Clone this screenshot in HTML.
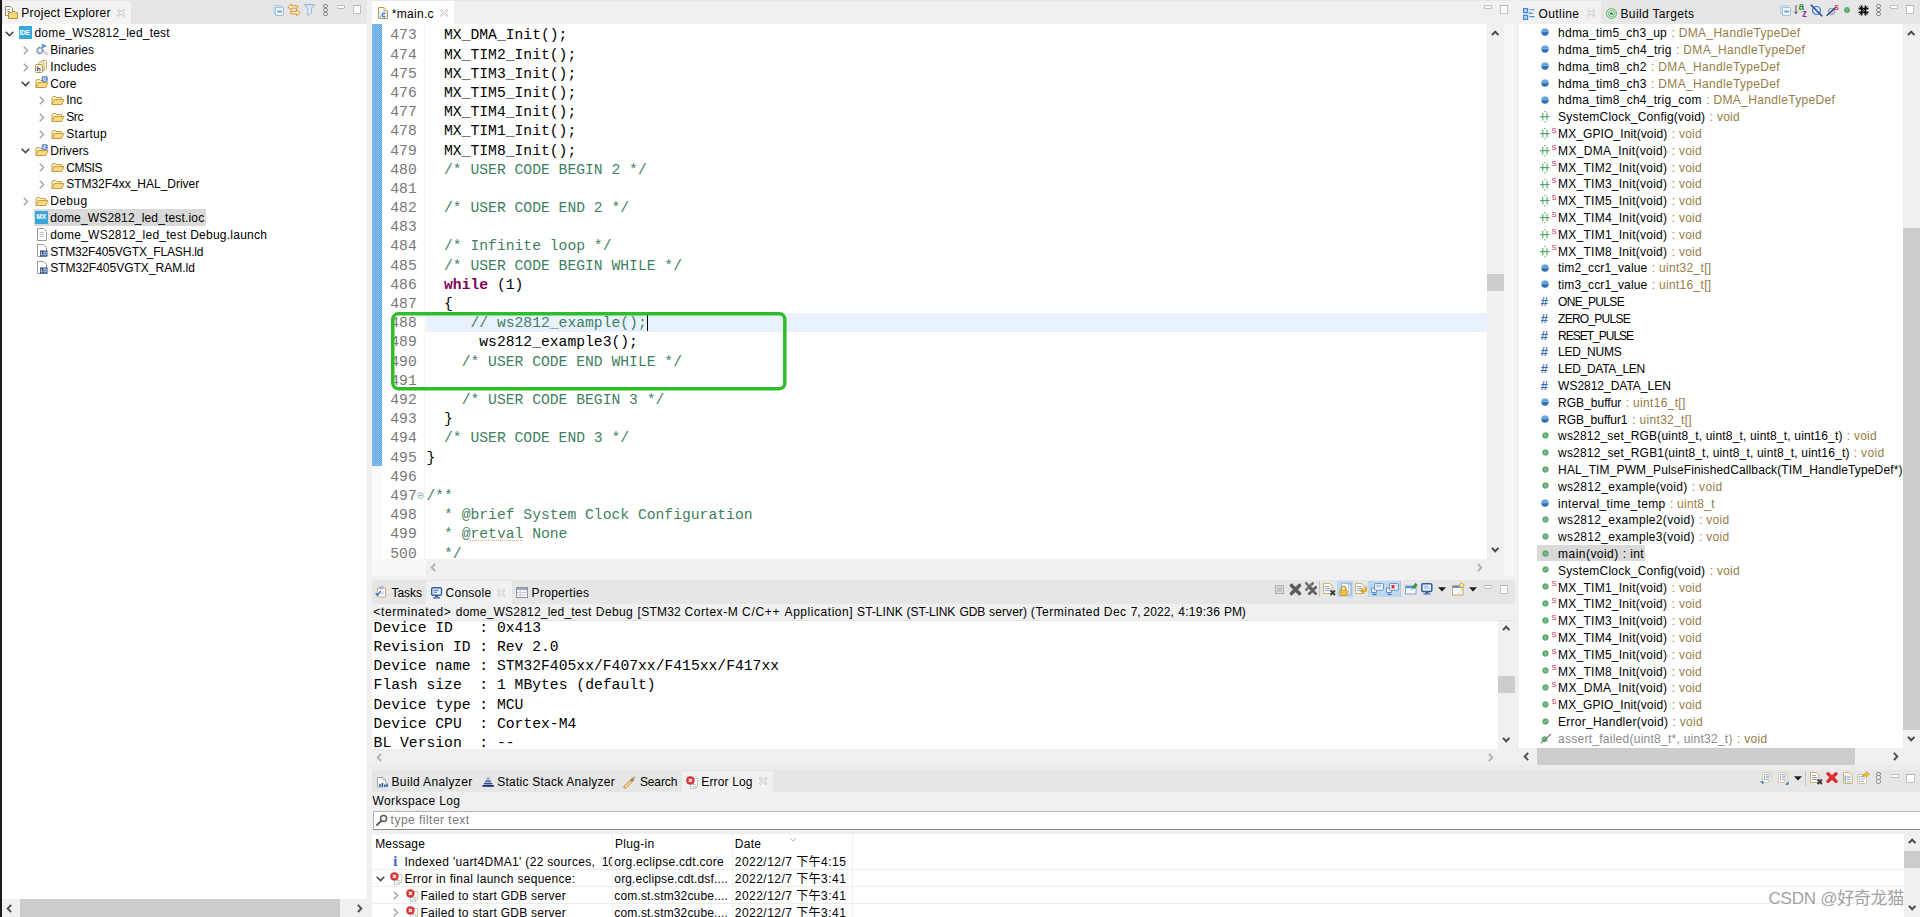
<!DOCTYPE html><html><head><meta charset="utf-8"><title>IDE</title><style>
*{box-sizing:border-box}
html,body{margin:0;padding:0}
body{width:1920px;height:917px;overflow:hidden;background:#f0f0f0;position:relative;font-family:"Liberation Sans","Noto Sans CJK SC",sans-serif;font-size:12px;color:#000}
.abs{position:absolute}
.t{position:absolute;white-space:pre;line-height:17px;height:17px}
.m{position:absolute;white-space:pre;font-family:"Liberation Mono",monospace;font-size:14.7px;line-height:19.2px;height:19.2px}
.c{color:#3f7f5f}
.u{text-decoration:underline dotted #f0a27c 1px;text-underline-offset:2px}
.k{color:#7f0055;font-weight:bold}
.ln{color:#787878}
.ty{color:#957d47}
.tabbar{position:absolute;background:#e6e6e6}
.tab{position:absolute;background:#f3f3f3}
.white{position:absolute;background:#fff}
svg{position:absolute;overflow:visible}
</style></head><body>
<div class="abs" style="left:0px;top:0px;width:2px;height:917px;background:#1a1a1a;"></div>
<div class="abs" style="left:2px;top:0px;width:365px;height:24.4px;background:#e6e6e6;"></div>
<div class="abs" style="left:3px;top:1px;width:128px;height:23.4px;background:#f3f3f3;"></div>
<div class="abs" style="left:2px;top:24.4px;width:365px;height:875px;background:#fff;"></div>
<svg style="left:5px;top:6px" width="13" height="13" viewBox="0 0 13 13"><path d="M0.5 0.5 H5.5 L7.5 2.5 V9.5 H0.5 Z" fill="#fdfdfd" stroke="#9a8a60" stroke-width="1"/><path d="M2 3.5H5 M2 5.5H5" stroke="#7aa0d0" stroke-width="1"/><path d="M3.5 6.5 H6.5 L7.5 5.5 H10 L11 6.5 H12.5 V12.5 H3.5 Z" fill="#f7d774" stroke="#b8923a" stroke-width="1"/></svg>
<div class="t" style="left:21.3px;top:5.0px;letter-spacing:0.252px;">Project Explorer</div>
<svg style="left:117px;top:9px" width="8.4" height="7.8" viewBox="0 0 8 8" preserveAspectRatio="none"><path d="M0.3 1.4 L1.4 0.3 L4 2.9 L6.6 0.3 L7.7 1.4 L5.1 4 L7.7 6.6 L6.6 7.7 L4 5.1 L1.4 7.7 L0.3 6.6 L2.9 4 Z" fill="#fbfbfb" stroke="#b9b9b9" stroke-width=".8"/></svg>
<svg style="left:273px;top:5px" width="11" height="11" viewBox="0 0 11 11"><rect x="0.5" y="0.5" width="8" height="8" rx=".6" fill="#d5e4f6" stroke="#b4c9e6" stroke-width=".9"/><rect x="2.4" y="2.4" width="8.1" height="8.1" rx=".6" fill="#eaf3fd" stroke="#9db6da" stroke-width=".9"/><path d="M4.2 6.5H8.8" stroke="#6f9cc8" stroke-width="1.7"/></svg>
<svg style="left:287px;top:3px" width="14" height="14" viewBox="0 0 14 14"><path d="M0.8 4 L4.6 0.8 V2.8 H10.6 V5.2 H4.6 V7.2 Z" fill="#fbeec4" stroke="#d39b34" stroke-width="1"/><path d="M13.2 9.6 L9.4 6.4 V8.4 H3.4 V10.8 H9.4 V12.8 Z" fill="#fbeec4" stroke="#d39b34" stroke-width="1"/></svg>
<svg style="left:303.5px;top:4px" width="11" height="12" viewBox="0 0 11 12"><defs><linearGradient id="fg1" x1="0" y1="0" x2="0" y2="1"><stop offset="0" stop-color="#cfe6fa"/><stop offset="1" stop-color="#f6faff"/></linearGradient></defs><path d="M0.6 0.6 H10.4 L7.3 4.6 V9.2 L3.8 11.4 V4.6 Z" fill="url(#fg1)" stroke="#94b0da" stroke-width="1"/></svg>
<div class="abs" style="left:323.4px;top:4.0px;width:4.4px;height:4.4px;border:0.8px solid #858585;border-radius:2.2px;background:#f8f8f8"></div>
<div class="abs" style="left:323.4px;top:7.9px;width:4.4px;height:4.4px;border:0.8px solid #858585;border-radius:2.2px;background:#f8f8f8"></div>
<div class="abs" style="left:323.4px;top:11.8px;width:4.4px;height:4.4px;border:0.8px solid #858585;border-radius:2.2px;background:#f8f8f8"></div>
<div class="abs" style="left:337px;top:5.3px;width:8.2px;height:3.6px;border:1px solid #bdbdbd;background:#fff;border-radius:1px"></div>
<div class="abs" style="left:352.9px;top:5.3px;width:8.3px;height:8.5px;border:1px solid #c2c2c2;border-top:1.6px solid #b2b2b2;background:#fff"></div>
<svg style="left:5px;top:30.5px" width="9" height="6" viewBox="0 0 9 6"><path d="M0.7 0.8 L4.5 4.6 L8.3 0.8" fill="none" stroke="#404040" stroke-width="1.5"/></svg>
<div class="abs" style="left:19px;top:26.0px;width:13px;height:13px;background:#39a9dc;"></div>
<div class="t" style="left:19.5px;top:28.5px;font-size:6.5px;font-weight:bold;color:#fff;line-height:8px;height:8px;letter-spacing:-0.2px">IDE</div>
<div class="t" style="left:34.5px;top:25.2px;letter-spacing:0.194px;">dome_WS2812_led_test</div>
<svg style="left:23px;top:45.8px" width="6" height="9" viewBox="0 0 6 9"><path d="M0.8 0.7 L4.6 4.5 L0.8 8.3" fill="none" stroke="#a0a0a0" stroke-width="1.3"/></svg>
<svg style="left:35px;top:42.8px" width="13" height="13" viewBox="0 0 13 13"><circle cx="5" cy="7.5" r="3.2" fill="#b9c6da" stroke="#5f7aa3" stroke-width="1.2" stroke-dasharray="1.6 1"/><circle cx="5" cy="7.5" r="1.2" fill="#fff"/><path d="M7 0.5 L12 3 L7 5.5 Z" fill="#5b9bd5"/><path d="M10 8v4 M12 9v3" stroke="#b0b0b0"/></svg>
<div class="t" style="left:50.2px;top:42.0px;letter-spacing:0.068px;">Binaries</div>
<svg style="left:23px;top:62.6px" width="6" height="9" viewBox="0 0 6 9"><path d="M0.8 0.7 L4.6 4.5 L0.8 8.3" fill="none" stroke="#a0a0a0" stroke-width="1.3"/></svg>
<svg style="left:35px;top:59.6px" width="13" height="13" viewBox="0 0 13 13"><rect x="6.5" y="0.5" width="5" height="9" rx="1" fill="#fdf6dc" stroke="#c8ab6a"/><rect x="4" y="2" width="5" height="9" rx="1" fill="#fdf6dc" stroke="#c8ab6a"/><rect x="0.5" y="4.5" width="7" height="8" rx="1" fill="#fdf6dc" stroke="#b89650"/><path d="M2.5 6.5V11 M2.5 9 Q4 7.8 5 9 V11" stroke="#3d62a8" stroke-width="1.1" fill="none"/></svg>
<div class="t" style="left:50.2px;top:58.8px;letter-spacing:0.200px;">Includes</div>
<svg style="left:21px;top:80.9px" width="9" height="6" viewBox="0 0 9 6"><path d="M0.7 0.8 L4.5 4.6 L8.3 0.8" fill="none" stroke="#404040" stroke-width="1.5"/></svg>
<svg style="left:35px;top:76.4px" width="14" height="13" viewBox="0 0 14 13"><path d="M1 4.8 V11.5 H10.5 V4.5 H5.6 L4.6 3.6 H1.8 Z" fill="#fdf3c8" stroke="#c99a3c" stroke-width="1"/><path d="M1 11.5 L3.2 6.6 H13 L10.6 11.5 Z" fill="#fbdc86" stroke="#c99a3c" stroke-width="1"/><rect x="7" y="0.6" width="5.4" height="5" rx="1" fill="#6f96d8" stroke="#4a72b8" stroke-width=".6"/><path d="M10.8 2.2 A1.3 1.3 0 1 0 10.8 4" fill="none" stroke="#fff" stroke-width=".9"/></svg>
<div class="t" style="left:50.2px;top:75.6px;letter-spacing:0.071px;">Core</div>
<svg style="left:39px;top:96.2px" width="6" height="9" viewBox="0 0 6 9"><path d="M0.8 0.7 L4.6 4.5 L0.8 8.3" fill="none" stroke="#a0a0a0" stroke-width="1.3"/></svg>
<svg style="left:51px;top:93.2px" width="14" height="13" viewBox="0 0 14 13"><path d="M1 4.8 V11.5 H10.5 V4.5 H5.6 L4.6 3.6 H1.8 Z" fill="#fdf3c8" stroke="#c99a3c" stroke-width="1"/><path d="M1 11.5 L3.2 6.6 H13 L10.6 11.5 Z" fill="#fbdc86" stroke="#c99a3c" stroke-width="1"/></svg>
<div class="t" style="left:66.2px;top:92.4px;letter-spacing:0.028px;">Inc</div>
<svg style="left:39px;top:113.0px" width="6" height="9" viewBox="0 0 6 9"><path d="M0.8 0.7 L4.6 4.5 L0.8 8.3" fill="none" stroke="#a0a0a0" stroke-width="1.3"/></svg>
<svg style="left:51px;top:110.0px" width="14" height="13" viewBox="0 0 14 13"><path d="M1 4.8 V11.5 H10.5 V4.5 H5.6 L4.6 3.6 H1.8 Z" fill="#fdf3c8" stroke="#c99a3c" stroke-width="1"/><path d="M1 11.5 L3.2 6.6 H13 L10.6 11.5 Z" fill="#fbdc86" stroke="#c99a3c" stroke-width="1"/></svg>
<div class="t" style="left:66.2px;top:109.2px;letter-spacing:-0.400px;">Src</div>
<svg style="left:39px;top:129.8px" width="6" height="9" viewBox="0 0 6 9"><path d="M0.8 0.7 L4.6 4.5 L0.8 8.3" fill="none" stroke="#a0a0a0" stroke-width="1.3"/></svg>
<svg style="left:51px;top:126.80000000000001px" width="14" height="13" viewBox="0 0 14 13"><path d="M1 4.8 V11.5 H10.5 V4.5 H5.6 L4.6 3.6 H1.8 Z" fill="#fdf3c8" stroke="#c99a3c" stroke-width="1"/><path d="M1 11.5 L3.2 6.6 H13 L10.6 11.5 Z" fill="#fbdc86" stroke="#c99a3c" stroke-width="1"/></svg>
<div class="t" style="left:66.2px;top:126.0px;letter-spacing:0.314px;">Startup</div>
<svg style="left:21px;top:148.10000000000002px" width="9" height="6" viewBox="0 0 9 6"><path d="M0.7 0.8 L4.5 4.6 L8.3 0.8" fill="none" stroke="#404040" stroke-width="1.5"/></svg>
<svg style="left:35px;top:143.60000000000002px" width="14" height="13" viewBox="0 0 14 13"><path d="M1 4.8 V11.5 H10.5 V4.5 H5.6 L4.6 3.6 H1.8 Z" fill="#fdf3c8" stroke="#c99a3c" stroke-width="1"/><path d="M1 11.5 L3.2 6.6 H13 L10.6 11.5 Z" fill="#fbdc86" stroke="#c99a3c" stroke-width="1"/><rect x="7" y="0.6" width="5.4" height="5" rx="1" fill="#6f96d8" stroke="#4a72b8" stroke-width=".6"/><path d="M10.8 2.2 A1.3 1.3 0 1 0 10.8 4" fill="none" stroke="#fff" stroke-width=".9"/></svg>
<div class="t" style="left:50.2px;top:142.8px;letter-spacing:0.100px;">Drivers</div>
<svg style="left:39px;top:163.4px" width="6" height="9" viewBox="0 0 6 9"><path d="M0.8 0.7 L4.6 4.5 L0.8 8.3" fill="none" stroke="#a0a0a0" stroke-width="1.3"/></svg>
<svg style="left:51px;top:160.4px" width="14" height="13" viewBox="0 0 14 13"><path d="M1 4.8 V11.5 H10.5 V4.5 H5.6 L4.6 3.6 H1.8 Z" fill="#fdf3c8" stroke="#c99a3c" stroke-width="1"/><path d="M1 11.5 L3.2 6.6 H13 L10.6 11.5 Z" fill="#fbdc86" stroke="#c99a3c" stroke-width="1"/></svg>
<div class="t" style="left:66.2px;top:159.6px;letter-spacing:-0.443px;">CMSIS</div>
<svg style="left:39px;top:180.20000000000002px" width="6" height="9" viewBox="0 0 6 9"><path d="M0.8 0.7 L4.6 4.5 L0.8 8.3" fill="none" stroke="#a0a0a0" stroke-width="1.3"/></svg>
<svg style="left:51px;top:177.20000000000002px" width="14" height="13" viewBox="0 0 14 13"><path d="M1 4.8 V11.5 H10.5 V4.5 H5.6 L4.6 3.6 H1.8 Z" fill="#fdf3c8" stroke="#c99a3c" stroke-width="1"/><path d="M1 11.5 L3.2 6.6 H13 L10.6 11.5 Z" fill="#fbdc86" stroke="#c99a3c" stroke-width="1"/></svg>
<div class="t" style="left:66.2px;top:176.4px;letter-spacing:-0.019px;">STM32F4xx_HAL_Driver</div>
<svg style="left:23px;top:197.0px" width="6" height="9" viewBox="0 0 6 9"><path d="M0.8 0.7 L4.6 4.5 L0.8 8.3" fill="none" stroke="#a0a0a0" stroke-width="1.3"/></svg>
<svg style="left:35px;top:194.0px" width="14" height="13" viewBox="0 0 14 13"><path d="M1 4.8 V11.5 H10.5 V4.5 H5.6 L4.6 3.6 H1.8 Z" fill="#fdf3c8" stroke="#c99a3c" stroke-width="1"/><path d="M1 11.5 L3.2 6.6 H13 L10.6 11.5 Z" fill="#fbdc86" stroke="#c99a3c" stroke-width="1"/></svg>
<div class="t" style="left:50.2px;top:193.2px;letter-spacing:0.385px;">Debug</div>
<div class="abs" style="left:34px;top:209.4px;width:172px;height:16.8px;background:#d9d9d9;"></div>
<div class="abs" style="left:35px;top:210.8px;width:13px;height:13px;background:#39a9dc;"></div>
<div class="t" style="left:36.5px;top:213.3px;font-size:6.5px;font-weight:bold;color:#fff;line-height:8px;height:8px;letter-spacing:-0.2px">MX</div>
<div class="t" style="left:50.2px;top:210.0px;letter-spacing:0.171px;">dome_WS2812_led_test.ioc</div>
<svg style="left:36px;top:227.60000000000002px" width="12" height="13" viewBox="0 0 12 13"><path d="M1.5 0.5 H7.5 L10.5 3.5 V12.5 H1.5 Z" fill="#fff" stroke="#9a9a9a" stroke-width="1"/><path d="M3.5 4.5H8 M3.5 6.5H8 M3.5 8.5H8" stroke="#b5c7e3" stroke-width="1"/></svg>
<div class="t" style="left:50.2px;top:226.8px;letter-spacing:0.248px;">dome_WS2812_led_test Debug.launch</div>
<svg style="left:36px;top:244.4px" width="12" height="13" viewBox="0 0 12 13"><path d="M1.5 0.5 H7.5 L10.5 3.5 V12.5 H1.5 Z" fill="#fff" stroke="#9a9a9a" stroke-width="1"/><rect x="4" y="6.5" width="7.5" height="6" fill="#2b4f8c"/><path d="M5.3 7.8V11H6.8 M8 7.8V11 H9 A1.5 1.6 0 0 0 9 7.8 Z" stroke="#fff" stroke-width=".8" fill="none"/></svg>
<div class="t" style="left:50.2px;top:243.6px;letter-spacing:-0.161px;">STM32F405VGTX_FLASH.ld</div>
<svg style="left:36px;top:261.20000000000005px" width="12" height="13" viewBox="0 0 12 13"><path d="M1.5 0.5 H7.5 L10.5 3.5 V12.5 H1.5 Z" fill="#fff" stroke="#9a9a9a" stroke-width="1"/><rect x="4" y="6.5" width="7.5" height="6" fill="#2b4f8c"/><path d="M5.3 7.8V11H6.8 M8 7.8V11 H9 A1.5 1.6 0 0 0 9 7.8 Z" stroke="#fff" stroke-width=".8" fill="none"/></svg>
<div class="t" style="left:50.2px;top:260.4px;letter-spacing:-0.001px;">STM32F405VGTX_RAM.ld</div>
<div class="abs" style="left:2px;top:899px;width:365px;height:18px;background:#f0f0f0;"></div>
<div class="abs" style="left:20px;top:899px;width:320px;height:18px;background:#cdcdcd;"></div>
<svg style="left:6px;top:903.5px" width="6" height="9" viewBox="0 0 6 9"><path d="M5.1 0.9 L1.7 4.5 L5.1 8.1" fill="none" stroke="#505050" stroke-width="2"/></svg>
<svg style="left:356.5px;top:903.5px" width="6" height="9" viewBox="0 0 6 9"><path d="M0.9 0.9 L4.3 4.5 L0.9 8.1" fill="none" stroke="#505050" stroke-width="2"/></svg>
<div class="abs" style="left:372px;top:0px;width:1142px;height:24.3px;background:#f0f0f0;"></div>
<div class="abs" style="left:372px;top:0px;width:1142px;height:1px;background:#e9e9e9;"></div>
<div class="abs" style="left:372px;top:1.3px;width:82px;height:23px;background:#fff;"></div>
<svg style="left:378px;top:7px" width="10" height="12" viewBox="0 0 10 12"><path d="M0.5 0.5 H6 L9.5 4 V11.5 H0.5 Z" fill="#fff" stroke="#b39b55" stroke-width="1"/><path d="M6 0.5 V4 H9.5" fill="#f2e3a8" stroke="#b39b55" stroke-width=".8"/><rect x="1.2" y="4.6" width="7.4" height="6.2" fill="#e2ebf8"/><path d="M7.2 6.9 A1.7 1.8 0 1 0 7.2 9.2" fill="none" stroke="#4a78b8" stroke-width="1.3"/><rect x="1.6" y="9" width="1" height="1" fill="#6a93c8"/></svg>
<div class="t" style="left:391.7px;top:5.6px;letter-spacing:0.312px;">*main.c</div>
<svg style="left:439.5px;top:9px" width="8.4" height="7.8" viewBox="0 0 8 8" preserveAspectRatio="none"><path d="M0.3 1.4 L1.4 0.3 L4 2.9 L6.6 0.3 L7.7 1.4 L5.1 4 L7.7 6.6 L6.6 7.7 L4 5.1 L1.4 7.7 L0.3 6.6 L2.9 4 Z" fill="#fbfbfb" stroke="#b9b9b9" stroke-width=".8"/></svg>
<div class="abs" style="left:1484px;top:5px;width:8.2px;height:3.6px;border:1px solid #bdbdbd;background:#fff;border-radius:1px"></div>
<div class="abs" style="left:1499.9px;top:5px;width:8.3px;height:8.5px;border:1px solid #c2c2c2;border-top:1.6px solid #b2b2b2;background:#fff"></div>
<div class="abs" style="left:372px;top:24.3px;width:1115px;height:534.7px;background:#fff;"></div>
<svg style="left:372px;top:24px" width="10" height="442" viewBox="0 0 10 442"><defs><pattern id="qd" width="2" height="2" patternUnits="userSpaceOnUse"><rect width="2" height="2" fill="#62a8e6"/><rect x="0" y="0" width="1" height="1" fill="#9ccbf1"/><rect x="1" y="1" width="1" height="1" fill="#7db9ec"/></pattern></defs><rect width="10" height="442" fill="url(#qd)"/></svg>
<div class="abs" style="left:424px;top:24.3px;width:1px;height:535px;background:#f5f5f5;"></div>
<div class="abs" style="left:372px;top:466px;width:10px;height:93px;background:#fafafa;"></div>
<div class="abs" style="left:425.5px;top:312.65000000000003px;width:1061.5px;height:19.19px;background:#e8f2fe;"></div>
<div class="m ln" style="left:390.3px;top:26.40px">473</div>
<div class="m" style="left:426.4px;top:26.40px">  MX_DMA_Init();</div>
<div class="m ln" style="left:390.3px;top:45.59px">474</div>
<div class="m" style="left:426.4px;top:45.59px">  MX_TIM2_Init();</div>
<div class="m ln" style="left:390.3px;top:64.78px">475</div>
<div class="m" style="left:426.4px;top:64.78px">  MX_TIM3_Init();</div>
<div class="m ln" style="left:390.3px;top:83.97px">476</div>
<div class="m" style="left:426.4px;top:83.97px">  MX_TIM5_Init();</div>
<div class="m ln" style="left:390.3px;top:103.16px">477</div>
<div class="m" style="left:426.4px;top:103.16px">  MX_TIM4_Init();</div>
<div class="m ln" style="left:390.3px;top:122.35px">478</div>
<div class="m" style="left:426.4px;top:122.35px">  MX_TIM1_Init();</div>
<div class="m ln" style="left:390.3px;top:141.54px">479</div>
<div class="m" style="left:426.4px;top:141.54px">  MX_TIM8_Init();</div>
<div class="m ln" style="left:390.3px;top:160.73px">480</div>
<div class="m" style="left:426.4px;top:160.73px"><span class="c">  /* USER CODE BEGIN 2 */</span></div>
<div class="m ln" style="left:390.3px;top:179.92px">481</div>
<div class="m ln" style="left:390.3px;top:199.11px">482</div>
<div class="m" style="left:426.4px;top:199.11px"><span class="c">  /* USER CODE END 2 */</span></div>
<div class="m ln" style="left:390.3px;top:218.30px">483</div>
<div class="m ln" style="left:390.3px;top:237.49px">484</div>
<div class="m" style="left:426.4px;top:237.49px"><span class="c">  /* Infinite loop */</span></div>
<div class="m ln" style="left:390.3px;top:256.68px">485</div>
<div class="m" style="left:426.4px;top:256.68px"><span class="c">  /* USER CODE BEGIN WHILE */</span></div>
<div class="m ln" style="left:390.3px;top:275.87px">486</div>
<div class="m" style="left:426.4px;top:275.87px">  <span class="k">while</span> (1)</div>
<div class="m ln" style="left:390.3px;top:295.06px">487</div>
<div class="m" style="left:426.4px;top:295.06px">  {</div>
<div class="m ln" style="left:390.3px;top:314.25px">488</div>
<div class="m" style="left:426.4px;top:314.25px"><span class="c">     // ws2812_example();</span></div>
<div class="m ln" style="left:390.3px;top:333.44px">489</div>
<div class="m" style="left:426.4px;top:333.44px">      ws2812_example3();</div>
<div class="m ln" style="left:390.3px;top:352.63px">490</div>
<div class="m" style="left:426.4px;top:352.63px"><span class="c">    /* USER CODE END WHILE */</span></div>
<div class="m ln" style="left:390.3px;top:371.82px">491</div>
<div class="m ln" style="left:390.3px;top:391.01px">492</div>
<div class="m" style="left:426.4px;top:391.01px"><span class="c">    /* USER CODE BEGIN 3 */</span></div>
<div class="m ln" style="left:390.3px;top:410.20px">493</div>
<div class="m" style="left:426.4px;top:410.20px">  }</div>
<div class="m ln" style="left:390.3px;top:429.39px">494</div>
<div class="m" style="left:426.4px;top:429.39px"><span class="c">  /* USER CODE END 3 */</span></div>
<div class="m ln" style="left:390.3px;top:448.58px">495</div>
<div class="m" style="left:426.4px;top:448.58px">}</div>
<div class="m ln" style="left:390.3px;top:467.77px">496</div>
<div class="m ln" style="left:390.3px;top:486.96px">497</div>
<div class="m" style="left:426.4px;top:486.96px"><span class="c">/**</span></div>
<div class="m ln" style="left:390.3px;top:506.15px">498</div>
<div class="m" style="left:426.4px;top:506.15px"><span class="c">  * @brief System Clock Configuration</span></div>
<div class="m ln" style="left:390.3px;top:525.34px">499</div>
<div class="m" style="left:426.4px;top:525.34px"><span class="c">  * @</span><span class="c u">retval</span><span class="c"> None</span></div>
<div class="m ln" style="left:390.3px;top:544.53px">500</div>
<div class="m" style="left:426.4px;top:544.53px"><span class="c">  */</span></div>
<svg style="left:416.5px;top:491.56px" width="7" height="7" viewBox="0 0 7 7"><circle cx="3.5" cy="3.5" r="2.9" fill="#f4f7fb" stroke="#9fb2cf" stroke-width=".9"/><path d="M2 3.5H5" stroke="#7f96b8" stroke-width=".9"/></svg>
<div class="abs" style="left:647px;top:313.85px;width:1.3px;height:17px;background:#000;"></div>
<svg style="left:391.4px;top:312.2px" width="395.6" height="78.4" viewBox="0 0 395.6 78.4"><rect x="1.75" y="1.75" width="392.1" height="74.9" rx="5.6" fill="none" stroke="#2fbe2a" stroke-width="3.5"/></svg>
<div class="abs" style="left:1487px;top:24px;width:17px;height:535px;background:#f0f0f0;"></div>
<div class="abs" style="left:1487px;top:274px;width:17px;height:17px;background:#cdcdcd;"></div>
<svg style="left:1491.3px;top:29.6px" width="8.4" height="6" viewBox="0 0 8.4 6"><path d="M0.9 5.1 L4.2 1.7 L7.5 5.1" fill="none" stroke="#4a4a4a" stroke-width="2"/></svg>
<svg style="left:1491.3px;top:547px" width="8.4" height="6" viewBox="0 0 8.4 6"><path d="M0.9 0.9 L4.2 4.3 L7.5 0.9" fill="none" stroke="#4a4a4a" stroke-width="2"/></svg>
<div class="abs" style="left:1504px;top:24px;width:10.3px;height:552px;background:#f8f8f8;"></div>
<div class="abs" style="left:372px;top:559px;width:53.5px;height:17px;background:#f8f8f8;"></div>
<div class="abs" style="left:425.5px;top:559px;width:1061.5px;height:17px;background:#f0f0f0;"></div>
<svg style="left:429.5px;top:563.0px" width="6" height="9" viewBox="0 0 6 9"><path d="M5.1 0.9 L1.7 4.5 L5.1 8.1" fill="none" stroke="#b4b4b4" stroke-width="2"/></svg>
<svg style="left:1476.5px;top:563.0px" width="6" height="9" viewBox="0 0 6 9"><path d="M0.9 0.9 L4.3 4.5 L0.9 8.1" fill="none" stroke="#b4b4b4" stroke-width="2"/></svg>
<div class="abs" style="left:1487px;top:559px;width:17px;height:17px;background:#f0f0f0;"></div>
<div class="abs" style="left:372px;top:580.3px;width:1142.5px;height:23.4px;background:#e6e6e6;"></div>
<div class="abs" style="left:426px;top:581.0px;width:86px;height:22.7px;background:#f1f1f1;"></div>
<div class="abs" style="left:372px;top:603.7px;width:1142.5px;height:17px;background:#f0f0f0;"></div>
<div class="abs" style="left:372px;top:619.8px;width:1142.5px;height:0.8px;background:#e4e4e4;"></div>
<div class="abs" style="left:372px;top:620.5px;width:1126px;height:128px;background:#fff;"></div>
<svg style="left:375.3px;top:586.2px" width="12" height="12" viewBox="0 0 13 13"><rect x="2.5" y="2" width="9" height="10" rx="1" fill="#fbfbfb" stroke="#c9a26a"/><rect x="5" y="0.5" width="4" height="3" rx="1" fill="#b9c5d6" stroke="#8a9bb5" stroke-width=".6"/><path d="M6 6.5H10 M6 8.5H10" stroke="#b8c6dc"/><path d="M0.8 7.8 L2.8 10 L6 5.6" fill="none" stroke="#2a7bd0" stroke-width="1.6"/></svg>
<div class="t" style="left:391.6px;top:584.7px;letter-spacing:-0.077px;">Tasks</div>
<svg style="left:431px;top:587px" width="12" height="12" viewBox="0 0 12 12"><rect x="0.7" y="0.7" width="9.8" height="7.6" rx="1.2" fill="#e9f0fb" stroke="#3560a8" stroke-width="1.4"/><path d="M2.6 3.2H7.6 M2.6 5.2H6" stroke="#3560a8" stroke-width=".9"/><path d="M4 8.6H7.2V10H4Z M2.2 10.2H9V11.4H2.2Z" fill="#3560a8"/></svg>
<div class="t" style="left:445.6px;top:584.7px;letter-spacing:0.238px;">Console</div>
<svg style="left:497px;top:589.3px" width="8.4" height="7.8" viewBox="0 0 8 8" preserveAspectRatio="none"><path d="M0.3 1.4 L1.4 0.3 L4 2.9 L6.6 0.3 L7.7 1.4 L5.1 4 L7.7 6.6 L6.6 7.7 L4 5.1 L1.4 7.7 L0.3 6.6 L2.9 4 Z" fill="#fbfbfb" stroke="#b9b9b9" stroke-width=".8"/></svg>
<svg style="left:516px;top:587px" width="12" height="11" viewBox="0 0 12 11"><rect x="0.5" y="0.5" width="11" height="10" fill="#fff" stroke="#8a8fa0"/><rect x="0.5" y="0.5" width="11" height="2.5" fill="#9aa6c0"/><path d="M0.5 5.5H11.5 M0.5 8H11.5 M4.2 3V10.5" stroke="#b5bccb" stroke-width=".8"/></svg>
<div class="t" style="left:531.6px;top:584.7px;letter-spacing:0.290px;">Properties</div>
<div class="abs" style="left:1275px;top:585px;width:9px;height:9px;border:1px solid #b0b0b0;background:#c4c4c4;box-shadow:inset 0 0 0 1px #dcdcdc"></div>
<svg style="left:1289.8px;top:584px" width="11" height="11" viewBox="0 0 11 11"><path d="M1.5 1.5 L9.5 9.5 M9.5 1.5 L1.5 9.5" stroke="#5e5e5e" stroke-width="3.6" stroke-linecap="round"/></svg>
<svg style="left:1304.5px;top:582.3px" width="9" height="9" viewBox="0 0 11 11"><path d="M1.5 1.5 L9.5 9.5 M9.5 1.5 L1.5 9.5" stroke="#767676" stroke-width="3.2" stroke-linecap="round"/></svg>
<svg style="left:1308px;top:586px" width="9" height="9" viewBox="0 0 11 11"><path d="M1.5 1.5 L9.5 9.5 M9.5 1.5 L1.5 9.5" stroke="#606060" stroke-width="3.2" stroke-linecap="round"/></svg>
<div class="abs" style="left:1319.3px;top:581px;width:1px;height:15.5px;background:#c4c4c4;"></div>
<svg style="left:1323px;top:582.5px" width="13" height="13" viewBox="0 0 13 13"><path d="M0.5 0.5 H6.5 L9 3 V10.5 H0.5 Z" fill="#fffdf2" stroke="#c9ab63" stroke-width=".9"/><path d="M2 3.5H6 M2 5.5H7.2 M2 7.5H7.2" stroke="#7d9fd6" stroke-width=".9"/><path d="M7.5 7.5 L12 12 M12 7.5 L7.5 12" stroke="#3a3a3a" stroke-width="1.8"/></svg>
<div class="abs" style="left:1337px;top:581px;width:15.8px;height:15.5px;background:#bcd9f3;"></div>
<svg style="left:1338.5px;top:582.5px" width="13" height="13" viewBox="0 0 13 13"><rect x="2.5" y="0.5" width="10" height="11.5" fill="#fff" stroke="#9ab0cc" stroke-width=".8"/><rect x="9.6" y="1.2" width="2.3" height="10" fill="#dbe3ee" stroke="#9ab0cc" stroke-width=".5"/><path d="M2.3 7.5 V5.6 A2.2 2.2 0 0 1 6.7 5.6 V7.5" fill="none" stroke="#c79a2a" stroke-width="1.4"/><rect x="0.8" y="7" width="7.4" height="5.5" rx=".8" fill="#f0c23c" stroke="#b98a1e" stroke-width=".7"/></svg>
<svg style="left:1354.5px;top:582.5px" width="13" height="13" viewBox="0 0 13 13"><path d="M0.5 0.5 H6.5 L9 3 V10.5 H0.5 Z" fill="#fffdf2" stroke="#c9ab63" stroke-width=".9"/><path d="M2 3.5H6 M2 5.5H7.2 M2 7.5H7.2" stroke="#7d9fd6" stroke-width=".9"/><path d="M11.2 3.5 V8 H6.5 M8.3 6 L6.2 8 L8.3 10" fill="none" stroke="#d9a520" stroke-width="1.7"/></svg>
<div class="abs" style="left:1368px;top:581px;width:31.5px;height:15.5px;background:#bcd9f3;"></div>
<svg style="left:1370.5px;top:582.5px" width="13" height="13" viewBox="0 0 13 13"><rect x="0.6" y="5" width="5" height="4.4" fill="#e6eefa" stroke="#5a82bd" stroke-width=".8"/><path d="M1.2 11.6H5.6 M3.3 9.4V11.6" stroke="#4a76b8" stroke-width="1"/><rect x="3.6" y="0.6" width="8.8" height="6.6" rx=".8" fill="#f4f8ff" stroke="#5a82bd" stroke-width=".9"/><path d="M5.2 2.4H9.6 M5.2 3.8H10.6" stroke="#8fa8cf" stroke-width=".8"/></svg>
<svg style="left:1385.5px;top:582.5px" width="13" height="13" viewBox="0 0 13 13"><rect x="0.6" y="5" width="5" height="4.4" fill="#e6eefa" stroke="#5a82bd" stroke-width=".8"/><path d="M1.2 11.6H5.6 M3.3 9.4V11.6" stroke="#4a76b8" stroke-width="1"/><rect x="3.6" y="0.6" width="8.8" height="6.6" rx=".8" fill="#f4f8ff" stroke="#5a82bd" stroke-width=".9"/><path d="M5.6 2.1 L8.4 5.4 M8.4 2.1 L5.6 5.4" stroke="#e02020" stroke-width="1.4"/><path d="M9.4 2.8H11.4" stroke="#9ab" stroke-width=".7"/></svg>
<div class="abs" style="left:1400.2px;top:581px;width:1px;height:15.5px;background:#c4c4c4;"></div>
<svg style="left:1405px;top:582px" width="13" height="13" viewBox="0 0 13 13"><rect x="0.5" y="4" width="10.5" height="8" fill="#f3f8ff" stroke="#7d9cc9" stroke-width=".9"/><rect x="0.5" y="4" width="10.5" height="2.2" fill="#5b8fd6"/><path d="M6.6 7.8 L8.3 6.1" stroke="#555" stroke-width=".9"/><path d="M7.6 4.9 L10.4 1.3 L12.3 2.9 L9.4 6.4 Z" fill="#2fa84a" stroke="#1d7d33" stroke-width=".6"/></svg>
<svg style="left:1421px;top:582.5px" width="12" height="12" viewBox="0 0 12 12"><rect x="0.8" y="0.8" width="10" height="7.6" rx="1.2" fill="#eaf1fb" stroke="#2f5da8" stroke-width="1.5"/><path d="M3 3.4H7 M3 5.2H8.4" stroke="#88a5d6" stroke-width=".9"/><path d="M4.4 8.8H7.4V10.2H4.4Z M2.4 10.4H9.4V11.6H2.4Z" fill="#2f5da8"/></svg>
<svg style="left:1437.8px;top:587.3px" width="8" height="5" viewBox="0 0 8 5"><path d="M0 0.3 H8 L4 4.6 Z" fill="#1e1e1e"/></svg>
<svg style="left:1451.5px;top:581.5px" width="13" height="14" viewBox="0 0 13 14"><rect x="0.5" y="3.5" width="10.5" height="9.5" fill="#f7fbff" stroke="#c0a060" stroke-width=".9"/><rect x="0.9" y="3.9" width="9.7" height="2" fill="#5b8fd6"/><path d="M9.5 0.6 L12.4 3.2 L9.5 5.8 L6.8 3.2 Z" fill="#fbe9a0" stroke="#c89a2a" stroke-width=".8"/><path d="M9.6 6 Q9.6 11 5.5 12.6" fill="none" stroke="#f2d98a" stroke-width="1"/></svg>
<svg style="left:1469px;top:587.3px" width="8" height="5" viewBox="0 0 8 5"><path d="M0 0.3 H8 L4 4.6 Z" fill="#1e1e1e"/></svg>
<div class="abs" style="left:1484px;top:585px;width:8.2px;height:3.6px;border:1px solid #bdbdbd;background:#fff;border-radius:1px"></div>
<div class="abs" style="left:1499.9px;top:585px;width:8.3px;height:8.5px;border:1px solid #c2c2c2;border-top:1.6px solid #b2b2b2;background:#fff"></div>
<div class="abs" style="left:0;top:0">
<div class="t" style="left:373.35px;top:603.5px;letter-spacing:0.615px;">&lt;terminated&gt;</div>
<div class="t" style="left:455.85px;top:603.5px;letter-spacing:0.209px;">dome_WS2812_led_test</div>
<div class="t" style="left:595.85px;top:603.5px;letter-spacing:0.395px;">Debug</div>
<div class="t" style="left:637.6px;top:603.5px;letter-spacing:0.222px;">[STM32</div>
<div class="t" style="left:684.6px;top:603.5px;letter-spacing:0.532px;">Cortex-M</div>
<div class="t" style="left:742.1px;top:603.5px;letter-spacing:0.683px;">C/C++</div>
<div class="t" style="left:784.6px;top:603.5px;letter-spacing:0.546px;">Application]</div>
<div class="t" style="left:857.1px;top:603.5px;letter-spacing:0.034px;">ST-LINK</div>
<div class="t" style="left:906.6px;top:603.5px;letter-spacing:-0.093px;">(ST-LINK</div>
<div class="t" style="left:959.6px;top:603.5px;letter-spacing:-0.139px;">GDB</div>
<div class="t" style="left:989.1px;top:603.5px;letter-spacing:0.108px;">server)</div>
<div class="t" style="left:1030.85px;top:603.5px;letter-spacing:0.545px;">(Terminated</div>
<div class="t" style="left:1103.85px;top:603.5px;letter-spacing:0.419px;">Dec</div>
<div class="t" style="left:1130.85px;top:603.5px;letter-spacing:-0.333px;">7,</div>
<div class="t" style="left:1143.35px;top:603.5px;letter-spacing:0.114px;">2022,</div>
<div class="t" style="left:1178.35px;top:603.5px;letter-spacing:0.258px;">4:19:36</div>
<div class="t" style="left:1224.1px;top:603.5px;letter-spacing:-0.133px;">PM)</div>
</div>
<div class="abs" style="left:372px;top:620.5px;width:1126px;height:128px;overflow:hidden">
<div class="m" style="left:1.6px;top:-1.60px">Device ID   : 0x413</div>
<div class="m" style="left:1.6px;top:17.59px">Revision ID : Rev 2.0</div>
<div class="m" style="left:1.6px;top:36.78px">Device name : STM32F405xx/F407xx/F415xx/F417xx</div>
<div class="m" style="left:1.6px;top:55.97px">Flash size  : 1 MBytes (default)</div>
<div class="m" style="left:1.6px;top:75.16px">Device type : MCU</div>
<div class="m" style="left:1.6px;top:94.35px">Device CPU  : Cortex-M4</div>
<div class="m" style="left:1.6px;top:113.54px">BL Version  : --</div>
</div>
<div class="abs" style="left:1498px;top:620.5px;width:16.5px;height:128px;background:#f0f0f0;"></div>
<div class="abs" style="left:1498px;top:676px;width:16.5px;height:17px;background:#cdcdcd;"></div>
<svg style="left:1502.05px;top:625.1px" width="8.4" height="6" viewBox="0 0 8.4 6"><path d="M0.9 5.1 L4.2 1.7 L7.5 5.1" fill="none" stroke="#4a4a4a" stroke-width="2"/></svg>
<svg style="left:1502.05px;top:736.5px" width="8.4" height="6" viewBox="0 0 8.4 6"><path d="M0.9 0.9 L4.2 4.3 L7.5 0.9" fill="none" stroke="#4a4a4a" stroke-width="2"/></svg>
<div class="abs" style="left:372px;top:748.5px;width:1126px;height:17px;background:#f0f0f0;"></div>
<svg style="left:376px;top:752.5px" width="6" height="9" viewBox="0 0 6 9"><path d="M5.1 0.9 L1.7 4.5 L5.1 8.1" fill="none" stroke="#b4b4b4" stroke-width="2"/></svg>
<svg style="left:1487.5px;top:752.5px" width="6" height="9" viewBox="0 0 6 9"><path d="M0.9 0.9 L4.3 4.5 L0.9 8.1" fill="none" stroke="#b4b4b4" stroke-width="2"/></svg>
<div class="abs" style="left:1498px;top:748.5px;width:16.5px;height:17px;background:#f0f0f0;"></div>
<div class="abs" style="left:372px;top:765px;width:1548px;height:5px;background:#ececec;"></div>
<div class="abs" style="left:372px;top:769.8px;width:1548px;height:22.7px;background:#e6e6e6;"></div>
<div class="abs" style="left:682px;top:770.5px;width:91.2px;height:22px;background:#f1f1f1;"></div>
<svg style="left:377px;top:776.5px" width="11" height="11" viewBox="0 0 11 11"><path d="M0.5 0.5 H6 L8.5 3 V10.5 H0.5 Z" fill="#fff" stroke="#9a9a9a" stroke-width=".9"/><path d="M6 0.5 V3 H8.5" fill="#f4e6b0" stroke="#b9a36a" stroke-width=".7"/><rect x="1.6" y="5.6" width="9" height="5" fill="#e8effa"/><path d="M3 10V7 M5.4 10V6 M7.8 10V7.6 M10 10V6.6" stroke="#2b4f9c" stroke-width="1.5"/></svg>
<div class="t" style="left:391.5px;top:774.2px;letter-spacing:0.361px;">Build Analyzer</div>
<svg style="left:481.5px;top:777px" width="12" height="10" viewBox="0 0 12 10"><path d="M4.6 0.6H7.6V2.6H4.6Z" fill="#8fa0c8"/><path d="M3.4 3.2H8.8V5.2H3.4Z" fill="#5b73b0"/><path d="M2 5.8H10.2V7.4H2Z" fill="#2f4a8c"/><path d="M0.4 8H11.8V9.8H0.4Z" fill="#1c2f66"/></svg>
<div class="t" style="left:497.2px;top:774.2px;letter-spacing:0.242px;">Static Stack Analyzer</div>
<svg style="left:623.5px;top:775.5px" width="13" height="12" viewBox="0 0 13 12"><path d="M1 11 L8.6 3.6" stroke="#c9a24a" stroke-width="3.4" stroke-linecap="round"/><path d="M1.4 10.6 L6.4 5.8" stroke="#f1d68a" stroke-width="1.6" stroke-linecap="round"/><path d="M8 4.4 L10.4 2" stroke="#8a8a8a" stroke-width="2.6" stroke-linecap="round"/><path d="M10.6 0.3 L11.2 1.8 L12.7 2.3 L11.2 2.8 L10.6 4.3 L10 2.8 L8.6 2.3 L10 1.8Z" fill="#f7e27a"/></svg>
<div class="t" style="left:639.9px;top:774.2px;letter-spacing:-0.122px;">Search</div>
<svg style="left:686.3px;top:776px" width="13" height="13" viewBox="0 0 13 13"><path d="M4.5 2.5 H11.6 V10 L9.4 12.4 H4.5 Z" fill="#fdfdf6" stroke="#a9b9d4" stroke-width=".8"/><path d="M9.4 12.4 V10 H11.6" fill="#f2dfa0" stroke="#c9b070" stroke-width=".6"/><path d="M6 8.5H10 M6 10.3H8.6" stroke="#9db3d8" stroke-width=".7"/><circle cx="4.4" cy="4.4" r="3.9" fill="#e23a3a" stroke="#b31f1f" stroke-width=".6"/><path d="M2.9 2.9 L5.9 5.9 M5.9 2.9 L2.9 5.9" stroke="#fff" stroke-width="1.3"/></svg>
<div class="t" style="left:701.3px;top:774.2px;letter-spacing:0.141px;">Error Log</div>
<svg style="left:758.8px;top:777.4px" width="8.4" height="7.8" viewBox="0 0 8 8" preserveAspectRatio="none"><path d="M0.3 1.4 L1.4 0.3 L4 2.9 L6.6 0.3 L7.7 1.4 L5.1 4 L7.7 6.6 L6.6 7.7 L4 5.1 L1.4 7.7 L0.3 6.6 L2.9 4 Z" fill="#fbfbfb" stroke="#b9b9b9" stroke-width=".8"/></svg>
<svg style="left:1760px;top:771.5px" width="13" height="13" viewBox="0 0 13 13"><path d="M2.5 0.6 H11.3 V8 L8.6 10.6 H2.5 Z" fill="#fbfaf2" stroke="#d3c39a" stroke-width=".8"/><path d="M8.6 10.6 V8 H11.3" fill="#f6dcc0" stroke="#e0c6a0" stroke-width=".5"/><path d="M4 2.6H5 M4 5H5 M4 7.4H5" stroke="#5f8fd0" stroke-width="1.3"/><path d="M6 2.6H10 M6 5H10 M6 7.4H9" stroke="#9db8e0" stroke-width="1.3"/><path d="M0 9.3 L3.4 9.3 L3.4 12.6 Z" fill="#2f6fc0"/></svg>
<svg style="left:1776px;top:771.5px" width="13" height="13" viewBox="0 0 13 13"><path d="M2.5 0.6 H11.3 V8 L8.6 10.6 H2.5 Z" fill="#fbfaf2" stroke="#d3c39a" stroke-width=".8"/><path d="M8.6 10.6 V8 H11.3" fill="#f6dcc0" stroke="#e0c6a0" stroke-width=".5"/><path d="M4 2.6H5 M4 5H5 M4 7.4H5" stroke="#5f8fd0" stroke-width="1.3"/><path d="M6 2.6H10 M6 5H10 M6 7.4H9" stroke="#9db8e0" stroke-width="1.3"/><path d="M12.6 9.3 L12.6 12.8 L9.2 12.8 Z" fill="#2f6fc0"/></svg>
<svg style="left:1794px;top:775.6px" width="8" height="5" viewBox="0 0 8 5"><path d="M0 0.3 H8 L4 4.6 Z" fill="#1e1e1e"/></svg>
<div class="abs" style="left:1805.4px;top:770.5px;width:1px;height:15px;background:#c4c4c4;"></div>
<svg style="left:1810px;top:771.5px" width="13" height="13" viewBox="0 0 13 13"><path d="M0.5 0.5 H6.5 L9 3 V10.5 H0.5 Z" fill="#fffdf2" stroke="#c9ab63" stroke-width=".9"/><path d="M2 3.5H6 M2 5.5H7.2 M2 7.5H7.2" stroke="#7d9fd6" stroke-width=".9"/><path d="M7.5 7.5 L12 12 M12 7.5 L7.5 12" stroke="#3a3a3a" stroke-width="1.8"/></svg>
<svg style="left:1826.3px;top:772px" width="12" height="11" viewBox="0 0 12 11"><path d="M2 1.8 L10 9.2 M10 1.8 L2 9.2" stroke="#df2a2e" stroke-width="3.5" stroke-linecap="round"/></svg>
<svg style="left:1843px;top:771.5px" width="10" height="12" viewBox="0 0 10 12"><path d="M0.5 0.5 H6 L9.3 3.6 V11.5 H0.5 Z" fill="#fffdf2" stroke="#c9ab63" stroke-width=".9"/><path d="M2.2 3.4V10.4" stroke="#5f8fd0" stroke-width="1"/><path d="M3.6 5H7.6 M3.6 7.4H7.6 M3.6 9.8H7.6" stroke="#9db8e0" stroke-width="1.3"/></svg>
<svg style="left:1856.5px;top:770.8px" width="13" height="13" viewBox="0 0 13 13"><rect x="0.5" y="3.5" width="9" height="9" rx="1" fill="#fdfbf0" stroke="#cdb98a" stroke-width=".8"/><path d="M1.8 5.6H2.8 M1.8 8H2.8 M1.8 10.4H2.8" stroke="#5f8fd0" stroke-width="1.2"/><path d="M3.6 5.6H8 M3.6 8H8 M3.6 10.4H6.6" stroke="#9db8e0" stroke-width="1.2"/><path d="M5.2 5.8 Q5.4 2.4 9 2.4 V0.6 L12.6 3.3 L9 6 V4.3 Q6.8 4.2 5.2 5.8Z" fill="#f1c232" stroke="#b8860b" stroke-width=".5"/></svg>
<div class="abs" style="left:1876.4px;top:771.5px;width:4.4px;height:4.4px;border:0.8px solid #858585;border-radius:2.2px;background:#f8f8f8"></div>
<div class="abs" style="left:1876.4px;top:775.4px;width:4.4px;height:4.4px;border:0.8px solid #858585;border-radius:2.2px;background:#f8f8f8"></div>
<div class="abs" style="left:1876.4px;top:779.3px;width:4.4px;height:4.4px;border:0.8px solid #858585;border-radius:2.2px;background:#f8f8f8"></div>
<div class="abs" style="left:1890.5px;top:774px;width:8.2px;height:3.6px;border:1px solid #bdbdbd;background:#fff;border-radius:1px"></div>
<div class="abs" style="left:1906.4px;top:774px;width:8.3px;height:8.5px;border:1px solid #c2c2c2;border-top:1.6px solid #b2b2b2;background:#fff"></div>
<div class="t" style="left:372.6px;top:792.7px;letter-spacing:0.342px;">Workspace Log</div>
<div class="abs" style="left:373px;top:811.4px;width:1548px;height:18.6px;background:#fff;border:1px solid #b4b4b4;border-bottom-color:#8c8c8c"></div>
<svg style="left:376px;top:814px" width="12" height="12" viewBox="0 0 12 12"><circle cx="7.6" cy="4.4" r="3" fill="#fff" stroke="#5a5a5a" stroke-width="1.5"/><path d="M5.4 6.6 L1 11" stroke="#5a5a5a" stroke-width="1.9" stroke-linecap="round"/></svg>
<div class="t" style="left:390.6px;top:812.4px;letter-spacing:0.477px;color:#7a7a7a">type filter text</div>
<div class="abs" style="left:372px;top:833.7px;width:1531.5px;height:84px;background:#fff;"></div>
<div class="abs" style="left:612px;top:833.7px;width:1px;height:84px;background:#f0f0f0;"></div>
<div class="abs" style="left:732px;top:833.7px;width:1px;height:84px;background:#f0f0f0;"></div>
<div class="abs" style="left:851.5px;top:833.7px;width:1px;height:84px;background:#f0f0f0;"></div>
<div class="abs" style="left:372px;top:869.3px;width:1531.5px;height:1px;background:#ededed;"></div>
<div class="abs" style="left:372px;top:886.2px;width:1531.5px;height:1px;background:#ededed;"></div>
<div class="abs" style="left:372px;top:903.2px;width:1531.5px;height:1px;background:#ededed;"></div>
<div class="t" style="left:375.2px;top:835.5px;letter-spacing:0.157px;">Message</div>
<div class="t" style="left:614.9px;top:835.5px;letter-spacing:0.320px;">Plug-in</div>
<div class="t" style="left:734.8px;top:835.5px;letter-spacing:0.260px;">Date</div>
<svg style="left:789.5px;top:837.5px" width="6" height="4" viewBox="0 0 6 4"><path d="M0.4 0.5 L3 3.2 L5.6 0.5" fill="none" stroke="#9a9a9a" stroke-width=".8"/></svg>
<div class="t" style="left:393.2px;top:853.3px;font-family:'Liberation Serif',serif;font-weight:bold;font-size:14.5px;color:#3b5fd0">i</div>
<div class="abs" style="left:404.4px;top:853.1px;width:207.3px;height:18px;overflow:hidden">
<div class="t" style="left:0px;top:1.0px;letter-spacing:0.316px;">Indexed 'uart4DMA1' (22 sources,</div>
<div class="t" style="left:197.3px;top:1.0px;letter-spacing:-0.186px;">10 headers)</div>
</div>
<div class="t" style="left:614.3px;top:854.1px;letter-spacing:0.282px;">org.eclipse.cdt.core</div>
<svg style="left:376px;top:876.1999999999999px" width="9" height="6" viewBox="0 0 9 6"><path d="M0.7 0.8 L4.5 4.6 L8.3 0.8" fill="none" stroke="#404040" stroke-width="1.5"/></svg>
<svg style="left:389.8px;top:872.1999999999999px" width="13" height="13" viewBox="0 0 13 13"><path d="M4.5 2.5 H11.6 V10 L9.4 12.4 H4.5 Z" fill="#fdfdf6" stroke="#a9b9d4" stroke-width=".8"/><path d="M9.4 12.4 V10 H11.6" fill="#f2dfa0" stroke="#c9b070" stroke-width=".6"/><path d="M6 8.5H10 M6 10.3H8.6" stroke="#9db3d8" stroke-width=".7"/><circle cx="4.4" cy="4.4" r="3.9" fill="#e23a3a" stroke="#b31f1f" stroke-width=".6"/><path d="M2.9 2.9 L5.9 5.9 M5.9 2.9 L2.9 5.9" stroke="#fff" stroke-width="1.3"/></svg>
<div class="t" style="left:404.4px;top:871.0px;letter-spacing:0.287px;">Error in final launch sequence:</div>
<div class="t" style="left:614.3px;top:871.0px;letter-spacing:0.158px;">org.eclipse.cdt.dsf....</div>
<svg style="left:393.3px;top:890.9px" width="6" height="9" viewBox="0 0 6 9"><path d="M0.8 0.7 L4.6 4.5 L0.8 8.3" fill="none" stroke="#a0a0a0" stroke-width="1.3"/></svg>
<svg style="left:405.6px;top:889.0999999999999px" width="13" height="13" viewBox="0 0 13 13"><path d="M4.5 2.5 H11.6 V10 L9.4 12.4 H4.5 Z" fill="#fdfdf6" stroke="#a9b9d4" stroke-width=".8"/><path d="M9.4 12.4 V10 H11.6" fill="#f2dfa0" stroke="#c9b070" stroke-width=".6"/><path d="M6 8.5H10 M6 10.3H8.6" stroke="#9db3d8" stroke-width=".7"/><circle cx="4.4" cy="4.4" r="3.9" fill="#e23a3a" stroke="#b31f1f" stroke-width=".6"/><path d="M2.9 2.9 L5.9 5.9 M5.9 2.9 L2.9 5.9" stroke="#fff" stroke-width="1.3"/></svg>
<div class="t" style="left:420.4px;top:887.9px;letter-spacing:0.265px;">Failed to start GDB server</div>
<div class="t" style="left:614.3px;top:887.9px;letter-spacing:0.149px;">com.st.stm32cube....</div>
<svg style="left:393.3px;top:907.8000000000001px" width="6" height="9" viewBox="0 0 6 9"><path d="M0.8 0.7 L4.6 4.5 L0.8 8.3" fill="none" stroke="#a0a0a0" stroke-width="1.3"/></svg>
<svg style="left:405.6px;top:906.0px" width="13" height="13" viewBox="0 0 13 13"><path d="M4.5 2.5 H11.6 V10 L9.4 12.4 H4.5 Z" fill="#fdfdf6" stroke="#a9b9d4" stroke-width=".8"/><path d="M9.4 12.4 V10 H11.6" fill="#f2dfa0" stroke="#c9b070" stroke-width=".6"/><path d="M6 8.5H10 M6 10.3H8.6" stroke="#9db3d8" stroke-width=".7"/><circle cx="4.4" cy="4.4" r="3.9" fill="#e23a3a" stroke="#b31f1f" stroke-width=".6"/><path d="M2.9 2.9 L5.9 5.9 M5.9 2.9 L2.9 5.9" stroke="#fff" stroke-width="1.3"/></svg>
<div class="t" style="left:420.4px;top:904.8px;letter-spacing:0.265px;">Failed to start GDB server</div>
<div class="t" style="left:614.3px;top:904.8px;letter-spacing:0.149px;">com.st.stm32cube....</div>
<div class="t" style="left:734.8px;top:854.1px;letter-spacing:0.464px;">2022/12/7 下午4:15</div>
<div class="t" style="left:734.8px;top:871.0px;letter-spacing:0.464px;">2022/12/7 下午3:41</div>
<div class="t" style="left:734.8px;top:887.9px;letter-spacing:0.464px;">2022/12/7 下午3:41</div>
<div class="t" style="left:734.8px;top:904.8px;letter-spacing:0.464px;">2022/12/7 下午3:41</div>
<div class="abs" style="left:1903.5px;top:833.7px;width:16.5px;height:83.3px;background:#f0f0f0;"></div>
<div class="abs" style="left:1903.5px;top:851.2px;width:16.5px;height:17px;background:#cdcdcd;"></div>
<svg style="left:1907.55px;top:838.3000000000001px" width="8.4" height="6" viewBox="0 0 8.4 6"><path d="M0.9 5.1 L4.2 1.7 L7.5 5.1" fill="none" stroke="#4a4a4a" stroke-width="2"/></svg>
<svg style="left:1907.55px;top:905.0px" width="8.4" height="6" viewBox="0 0 8.4 6"><path d="M0.9 0.9 L4.2 4.3 L7.5 0.9" fill="none" stroke="#4a4a4a" stroke-width="2"/></svg>
<div class="abs" style="left:1519px;top:0px;width:401px;height:24.7px;background:#e6e6e6;"></div>
<div class="abs" style="left:1519px;top:1px;width:82px;height:23.7px;background:#f1f1f1;"></div>
<div class="abs" style="left:1519px;top:24.4px;width:384px;height:723.6px;background:#fff;"></div>
<svg style="left:1523px;top:8px" width="12" height="12" viewBox="0 0 12 12"><rect x="0.6" y="0.6" width="4" height="4" fill="#bcd8f8" stroke="#3f86dc" stroke-width="1.2"/><rect x="0.6" y="7.4" width="4" height="4" fill="#bcd8f8" stroke="#3f86dc" stroke-width="1.2"/><path d="M6.5 1.8H11.5 M7 5.2H10.5 M6.5 8.6H11.5" stroke="#4f86c6" stroke-width="1.1"/><path d="M7.2 3.6 L5.6 5.2 L7.2 6.8Z" fill="#3f7fd0"/></svg>
<div class="t" style="left:1538.6px;top:5.6px;letter-spacing:0.381px;">Outline</div>
<svg style="left:1586.5px;top:9px" width="8.4" height="7.8" viewBox="0 0 8 8" preserveAspectRatio="none"><path d="M0.3 1.4 L1.4 0.3 L4 2.9 L6.6 0.3 L7.7 1.4 L5.1 4 L7.7 6.6 L6.6 7.7 L4 5.1 L1.4 7.7 L0.3 6.6 L2.9 4 Z" fill="#fbfbfb" stroke="#b9b9b9" stroke-width=".8"/></svg>
<svg style="left:1605.5px;top:8px" width="11" height="11" viewBox="0 0 11 11"><circle cx="5.5" cy="5.5" r="4.9" fill="#e9f6e9" stroke="#4aa04a" stroke-width=".9"/><circle cx="5.5" cy="5.5" r="3" fill="#fff" stroke="#4aa04a" stroke-width=".9"/><circle cx="5.5" cy="5.5" r="1.5" fill="#2f8f3f"/></svg>
<div class="t" style="left:1620.5px;top:5.6px;letter-spacing:0.357px;">Build Targets</div>
<svg style="left:1780.2px;top:4.6px" width="11" height="11" viewBox="0 0 11 11"><rect x="0.5" y="0.5" width="8" height="8" rx=".6" fill="#d5e4f6" stroke="#b4c9e6" stroke-width=".9"/><rect x="2.4" y="2.4" width="8.1" height="8.1" rx=".6" fill="#eaf3fd" stroke="#9db6da" stroke-width=".9"/><path d="M4.2 6.5H8.8" stroke="#6f9cc8" stroke-width="1.7"/></svg>
<svg style="left:1793.5px;top:3px" width="14" height="14" viewBox="0 0 14 14"><path d="M2 2V10.5 M0.3 8.6 L2 10.8 L3.7 8.6" fill="none" stroke="#555" stroke-width="1"/><text x="4.6" y="7" font-family="Liberation Sans,sans-serif" font-weight="bold" font-size="10" fill="#2f8f3f">a</text><text x="8" y="13.6" font-family="Liberation Sans,sans-serif" font-weight="bold" font-size="10" fill="#a02fa0">z</text></svg>
<svg style="left:1810px;top:4px" width="13" height="13" viewBox="0 0 13 13"><circle cx="6.5" cy="6.5" r="4" fill="#cfe3fa" stroke="#3f7fd0" stroke-width="1.2"/><path d="M4.6 6.5H8.4" stroke="#fff" stroke-width="1.5"/><path d="M0.8 0.8 L12.2 12.2" stroke="#2a3f9a" stroke-width="1.5"/></svg>
<svg style="left:1826px;top:4px" width="13" height="13" viewBox="0 0 13 13"><circle cx="5.5" cy="7.4" r="3.2" fill="#c9cdd6" stroke="#8a93a6" stroke-width="1"/><path d="M0.6 11.8 L9.6 3.4" stroke="#2a3f9a" stroke-width="1.4"/><text x="8.2" y="5.8" font-family="Liberation Sans,sans-serif" font-weight="bold" font-size="7" fill="#d0304f">S</text></svg>
<svg style="left:1844px;top:7px" width="6" height="6" viewBox="0 0 6 6"><circle cx="3" cy="3" r="2.6" fill="#62ba72" stroke="#48995a" stroke-width=".7"/></svg>
<svg style="left:1858px;top:4.5px" width="11" height="11" viewBox="0 0 11 11"><path d="M3.6 0.5V10.5 M7.4 0.5V10.5 M0.5 3.6H10.5 M0.5 7.4H10.5" stroke="#111" stroke-width="1.7"/><path d="M1.4 1.4 L9.6 9.6 M9.6 1.4 L1.4 9.6" stroke="#111" stroke-width=".9"/></svg>
<div class="abs" style="left:1876.4px;top:4.0px;width:4.4px;height:4.4px;border:0.8px solid #858585;border-radius:2.2px;background:#f8f8f8"></div>
<div class="abs" style="left:1876.4px;top:7.9px;width:4.4px;height:4.4px;border:0.8px solid #858585;border-radius:2.2px;background:#f8f8f8"></div>
<div class="abs" style="left:1876.4px;top:11.8px;width:4.4px;height:4.4px;border:0.8px solid #858585;border-radius:2.2px;background:#f8f8f8"></div>
<div class="abs" style="left:1890px;top:5px;width:8.2px;height:3.6px;border:1px solid #bdbdbd;background:#fff;border-radius:1px"></div>
<div class="abs" style="left:1905.9px;top:5px;width:8.3px;height:8.5px;border:1px solid #c2c2c2;border-top:1.6px solid #b2b2b2;background:#fff"></div>
<svg width="0" height="0" style="left:0;top:0"><defs><linearGradient id="bg1" x1="0" y1="0" x2="0" y2="1"><stop offset="0" stop-color="#86b6e6"/><stop offset="0.45" stop-color="#4f8fd0"/><stop offset="0.55" stop-color="#3575bd"/><stop offset="1" stop-color="#2c69b0"/></linearGradient></defs></svg>
<div class="abs" style="left:1519px;top:0;width:384px;height:748px;overflow:hidden">
<svg style="left:21.59999999999991px;top:28.299999999999997px" width="8" height="8" viewBox="0 0 8 8"><circle cx="4" cy="4" r="3.7" fill="url(#bg1)"/><path d="M0.9 3.7 H7.1" stroke="#a9cdf0" stroke-width=".7" opacity=".8"/></svg>
<div class="t" style="left:39.09999999999991px;top:25.2px;letter-spacing:0.218px;">hdma_tim5_ch3_up</div>
<div class="t" style="left:152.4000000000001px;top:25.2px;letter-spacing:0.330px;color:#957d47;">: DMA_HandleTypeDef</div>
<svg style="left:21.59999999999991px;top:45.1px" width="8" height="8" viewBox="0 0 8 8"><circle cx="4" cy="4" r="3.7" fill="url(#bg1)"/><path d="M0.9 3.7 H7.1" stroke="#a9cdf0" stroke-width=".7" opacity=".8"/></svg>
<div class="t" style="left:39.09999999999991px;top:42.0px;letter-spacing:0.270px;">hdma_tim5_ch4_trig</div>
<div class="t" style="left:157px;top:42.0px;letter-spacing:0.340px;color:#957d47;">: DMA_HandleTypeDef</div>
<svg style="left:21.59999999999991px;top:61.9px" width="8" height="8" viewBox="0 0 8 8"><circle cx="4" cy="4" r="3.7" fill="url(#bg1)"/><path d="M0.9 3.7 H7.1" stroke="#a9cdf0" stroke-width=".7" opacity=".8"/></svg>
<div class="t" style="left:39.09999999999991px;top:58.8px;letter-spacing:0.247px;">hdma_tim8_ch2</div>
<div class="t" style="left:132px;top:58.8px;letter-spacing:0.330px;color:#957d47;">: DMA_HandleTypeDef</div>
<svg style="left:21.59999999999991px;top:78.70000000000002px" width="8" height="8" viewBox="0 0 8 8"><circle cx="4" cy="4" r="3.7" fill="url(#bg1)"/><path d="M0.9 3.7 H7.1" stroke="#a9cdf0" stroke-width=".7" opacity=".8"/></svg>
<div class="t" style="left:39.09999999999991px;top:75.6px;letter-spacing:0.247px;">hdma_tim8_ch3</div>
<div class="t" style="left:132px;top:75.6px;letter-spacing:0.330px;color:#957d47;">: DMA_HandleTypeDef</div>
<svg style="left:21.59999999999991px;top:95.5px" width="8" height="8" viewBox="0 0 8 8"><circle cx="4" cy="4" r="3.7" fill="url(#bg1)"/><path d="M0.9 3.7 H7.1" stroke="#a9cdf0" stroke-width=".7" opacity=".8"/></svg>
<div class="t" style="left:39.09999999999991px;top:92.4px;letter-spacing:0.256px;">hdma_tim8_ch4_trig_com</div>
<div class="t" style="left:187.20000000000005px;top:92.4px;letter-spacing:0.330px;color:#957d47;">: DMA_HandleTypeDef</div>
<svg style="left:21.09999999999991px;top:111.30000000000001px" width="10" height="11.4" viewBox="0 0 10 11.4"><path d="M0 5.6H9.6" stroke="#55a868" stroke-width="1.25"/><path d="M2.8 2.1V9.2 M7 2.1V9.2" stroke="#55a868" stroke-width="1.1"/><path d="M4.1 0.6H5.7 M4.1 10.8H5.7" stroke="#6cb87e" stroke-width="1"/><path d="M1.4 1.9l.8 -.6 M8.4 1.9l-.8 -.6 M1.4 9.5l.8 .6 M8.4 9.5l-.8 .6" stroke="#9fd0aa" stroke-width=".8"/></svg>
<div class="t" style="left:39.09999999999991px;top:109.2px;letter-spacing:0.242px;">SystemClock_Config(void)</div>
<div class="t" style="left:190.70000000000005px;top:109.2px;letter-spacing:0.269px;color:#957d47;">: void</div>
<svg style="left:21.09999999999991px;top:128.10000000000002px" width="10" height="11.4" viewBox="0 0 10 11.4"><path d="M0 5.6H9.6" stroke="#55a868" stroke-width="1.25"/><path d="M2.8 2.1V9.2 M7 2.1V9.2" stroke="#55a868" stroke-width="1.1"/><path d="M4.1 0.6H5.7 M4.1 10.8H5.7" stroke="#6cb87e" stroke-width="1"/><path d="M1.4 1.9l.8 -.6 M8.4 1.9l-.8 -.6 M1.4 9.5l.8 .6 M8.4 9.5l-.8 .6" stroke="#9fd0aa" stroke-width=".8"/></svg>
<div class="t" style="left:32.40000000000009px;top:126.80000000000001px;font-size:7.7px;line-height:8px;height:8px;color:#d22c5c">S</div>
<div class="t" style="left:39.09999999999991px;top:126.0px;letter-spacing:0.101px;">MX_GPIO_Init(void)</div>
<div class="t" style="left:152.70000000000005px;top:126.0px;letter-spacing:0.269px;color:#957d47;">: void</div>
<svg style="left:21.09999999999991px;top:144.9px" width="10" height="11.4" viewBox="0 0 10 11.4"><path d="M0 5.6H9.6" stroke="#55a868" stroke-width="1.25"/><path d="M2.8 2.1V9.2 M7 2.1V9.2" stroke="#55a868" stroke-width="1.1"/><path d="M4.1 0.6H5.7 M4.1 10.8H5.7" stroke="#6cb87e" stroke-width="1"/><path d="M1.4 1.9l.8 -.6 M8.4 1.9l-.8 -.6 M1.4 9.5l.8 .6 M8.4 9.5l-.8 .6" stroke="#9fd0aa" stroke-width=".8"/></svg>
<div class="t" style="left:32.40000000000009px;top:143.6px;font-size:7.7px;line-height:8px;height:8px;color:#d22c5c">S</div>
<div class="t" style="left:39.09999999999991px;top:142.8px;letter-spacing:0.304px;">MX_DMA_Init(void)</div>
<div class="t" style="left:152.70000000000005px;top:142.8px;letter-spacing:0.269px;color:#957d47;">: void</div>
<svg style="left:21.09999999999991px;top:161.70000000000002px" width="10" height="11.4" viewBox="0 0 10 11.4"><path d="M0 5.6H9.6" stroke="#55a868" stroke-width="1.25"/><path d="M2.8 2.1V9.2 M7 2.1V9.2" stroke="#55a868" stroke-width="1.1"/><path d="M4.1 0.6H5.7 M4.1 10.8H5.7" stroke="#6cb87e" stroke-width="1"/><path d="M1.4 1.9l.8 -.6 M8.4 1.9l-.8 -.6 M1.4 9.5l.8 .6 M8.4 9.5l-.8 .6" stroke="#9fd0aa" stroke-width=".8"/></svg>
<div class="t" style="left:32.40000000000009px;top:160.4px;font-size:7.7px;line-height:8px;height:8px;color:#d22c5c">S</div>
<div class="t" style="left:39.09999999999991px;top:159.6px;letter-spacing:0.250px;">MX_TIM2_Init(void)</div>
<div class="t" style="left:152.70000000000005px;top:159.6px;letter-spacing:0.269px;color:#957d47;">: void</div>
<svg style="left:21.09999999999991px;top:178.50000000000003px" width="10" height="11.4" viewBox="0 0 10 11.4"><path d="M0 5.6H9.6" stroke="#55a868" stroke-width="1.25"/><path d="M2.8 2.1V9.2 M7 2.1V9.2" stroke="#55a868" stroke-width="1.1"/><path d="M4.1 0.6H5.7 M4.1 10.8H5.7" stroke="#6cb87e" stroke-width="1"/><path d="M1.4 1.9l.8 -.6 M8.4 1.9l-.8 -.6 M1.4 9.5l.8 .6 M8.4 9.5l-.8 .6" stroke="#9fd0aa" stroke-width=".8"/></svg>
<div class="t" style="left:32.40000000000009px;top:177.20000000000002px;font-size:7.7px;line-height:8px;height:8px;color:#d22c5c">S</div>
<div class="t" style="left:39.09999999999991px;top:176.4px;letter-spacing:0.250px;">MX_TIM3_Init(void)</div>
<div class="t" style="left:152.70000000000005px;top:176.4px;letter-spacing:0.269px;color:#957d47;">: void</div>
<svg style="left:21.09999999999991px;top:195.3px" width="10" height="11.4" viewBox="0 0 10 11.4"><path d="M0 5.6H9.6" stroke="#55a868" stroke-width="1.25"/><path d="M2.8 2.1V9.2 M7 2.1V9.2" stroke="#55a868" stroke-width="1.1"/><path d="M4.1 0.6H5.7 M4.1 10.8H5.7" stroke="#6cb87e" stroke-width="1"/><path d="M1.4 1.9l.8 -.6 M8.4 1.9l-.8 -.6 M1.4 9.5l.8 .6 M8.4 9.5l-.8 .6" stroke="#9fd0aa" stroke-width=".8"/></svg>
<div class="t" style="left:32.40000000000009px;top:194.0px;font-size:7.7px;line-height:8px;height:8px;color:#d22c5c">S</div>
<div class="t" style="left:39.09999999999991px;top:193.2px;letter-spacing:0.250px;">MX_TIM5_Init(void)</div>
<div class="t" style="left:152.70000000000005px;top:193.2px;letter-spacing:0.269px;color:#957d47;">: void</div>
<svg style="left:21.09999999999991px;top:212.10000000000002px" width="10" height="11.4" viewBox="0 0 10 11.4"><path d="M0 5.6H9.6" stroke="#55a868" stroke-width="1.25"/><path d="M2.8 2.1V9.2 M7 2.1V9.2" stroke="#55a868" stroke-width="1.1"/><path d="M4.1 0.6H5.7 M4.1 10.8H5.7" stroke="#6cb87e" stroke-width="1"/><path d="M1.4 1.9l.8 -.6 M8.4 1.9l-.8 -.6 M1.4 9.5l.8 .6 M8.4 9.5l-.8 .6" stroke="#9fd0aa" stroke-width=".8"/></svg>
<div class="t" style="left:32.40000000000009px;top:210.8px;font-size:7.7px;line-height:8px;height:8px;color:#d22c5c">S</div>
<div class="t" style="left:39.09999999999991px;top:210.0px;letter-spacing:0.250px;">MX_TIM4_Init(void)</div>
<div class="t" style="left:152.70000000000005px;top:210.0px;letter-spacing:0.269px;color:#957d47;">: void</div>
<svg style="left:21.09999999999991px;top:228.90000000000003px" width="10" height="11.4" viewBox="0 0 10 11.4"><path d="M0 5.6H9.6" stroke="#55a868" stroke-width="1.25"/><path d="M2.8 2.1V9.2 M7 2.1V9.2" stroke="#55a868" stroke-width="1.1"/><path d="M4.1 0.6H5.7 M4.1 10.8H5.7" stroke="#6cb87e" stroke-width="1"/><path d="M1.4 1.9l.8 -.6 M8.4 1.9l-.8 -.6 M1.4 9.5l.8 .6 M8.4 9.5l-.8 .6" stroke="#9fd0aa" stroke-width=".8"/></svg>
<div class="t" style="left:32.40000000000009px;top:227.60000000000002px;font-size:7.7px;line-height:8px;height:8px;color:#d22c5c">S</div>
<div class="t" style="left:39.09999999999991px;top:226.8px;letter-spacing:0.250px;">MX_TIM1_Init(void)</div>
<div class="t" style="left:152.70000000000005px;top:226.8px;letter-spacing:0.269px;color:#957d47;">: void</div>
<svg style="left:21.09999999999991px;top:245.70000000000002px" width="10" height="11.4" viewBox="0 0 10 11.4"><path d="M0 5.6H9.6" stroke="#55a868" stroke-width="1.25"/><path d="M2.8 2.1V9.2 M7 2.1V9.2" stroke="#55a868" stroke-width="1.1"/><path d="M4.1 0.6H5.7 M4.1 10.8H5.7" stroke="#6cb87e" stroke-width="1"/><path d="M1.4 1.9l.8 -.6 M8.4 1.9l-.8 -.6 M1.4 9.5l.8 .6 M8.4 9.5l-.8 .6" stroke="#9fd0aa" stroke-width=".8"/></svg>
<div class="t" style="left:32.40000000000009px;top:244.4px;font-size:7.7px;line-height:8px;height:8px;color:#d22c5c">S</div>
<div class="t" style="left:39.09999999999991px;top:243.6px;letter-spacing:0.250px;">MX_TIM8_Init(void)</div>
<div class="t" style="left:152.70000000000005px;top:243.6px;letter-spacing:0.269px;color:#957d47;">: void</div>
<svg style="left:21.59999999999991px;top:263.5px" width="8" height="8" viewBox="0 0 8 8"><circle cx="4" cy="4" r="3.7" fill="url(#bg1)"/><path d="M0.9 3.7 H7.1" stroke="#a9cdf0" stroke-width=".7" opacity=".8"/></svg>
<div class="t" style="left:39.09999999999991px;top:260.4px;letter-spacing:0.122px;">tim2_ccr1_value</div>
<div class="t" style="left:132.70000000000005px;top:260.4px;letter-spacing:0.313px;color:#957d47;">: uint32_t[]</div>
<svg style="left:21.59999999999991px;top:280.29999999999995px" width="8" height="8" viewBox="0 0 8 8"><circle cx="4" cy="4" r="3.7" fill="url(#bg1)"/><path d="M0.9 3.7 H7.1" stroke="#a9cdf0" stroke-width=".7" opacity=".8"/></svg>
<div class="t" style="left:39.09999999999991px;top:277.2px;letter-spacing:0.122px;">tim3_ccr1_value</div>
<div class="t" style="left:132.70000000000005px;top:277.2px;letter-spacing:0.313px;color:#957d47;">: uint16_t[]</div>
<div class="t" style="left:21.59999999999991px;top:295.9px;font-size:13px;font-weight:bold;font-style:italic;color:#3a6ab0;line-height:12px;height:12px">#</div>
<div class="t" style="left:39.09999999999991px;top:294.0px;letter-spacing:-0.681px;">ONE_PULSE</div>
<div class="t" style="left:21.59999999999991px;top:312.7px;font-size:13px;font-weight:bold;font-style:italic;color:#3a6ab0;line-height:12px;height:12px">#</div>
<div class="t" style="left:39.09999999999991px;top:310.8px;letter-spacing:-0.756px;">ZERO_PULSE</div>
<div class="t" style="left:21.59999999999991px;top:329.5px;font-size:13px;font-weight:bold;font-style:italic;color:#3a6ab0;line-height:12px;height:12px">#</div>
<div class="t" style="left:39.09999999999991px;top:327.6px;letter-spacing:-1.004px;">RESET_PULSE</div>
<div class="t" style="left:21.59999999999991px;top:346.29999999999995px;font-size:13px;font-weight:bold;font-style:italic;color:#3a6ab0;line-height:12px;height:12px">#</div>
<div class="t" style="left:39.09999999999991px;top:344.4px;letter-spacing:-0.257px;">LED_NUMS</div>
<div class="t" style="left:21.59999999999991px;top:363.09999999999997px;font-size:13px;font-weight:bold;font-style:italic;color:#3a6ab0;line-height:12px;height:12px">#</div>
<div class="t" style="left:39.09999999999991px;top:361.2px;letter-spacing:-0.289px;">LED_DATA_LEN</div>
<div class="t" style="left:21.59999999999991px;top:379.9px;font-size:13px;font-weight:bold;font-style:italic;color:#3a6ab0;line-height:12px;height:12px">#</div>
<div class="t" style="left:39.09999999999991px;top:378.0px;letter-spacing:-0.017px;">WS2812_DATA_LEN</div>
<svg style="left:21.59999999999991px;top:397.9px" width="8" height="8" viewBox="0 0 8 8"><circle cx="4" cy="4" r="3.7" fill="url(#bg1)"/><path d="M0.9 3.7 H7.1" stroke="#a9cdf0" stroke-width=".7" opacity=".8"/></svg>
<div class="t" style="left:39.09999999999991px;top:394.8px;letter-spacing:0.014px;">RGB_buffur</div>
<div class="t" style="left:106.79999999999995px;top:394.8px;letter-spacing:0.313px;color:#957d47;">: uint16_t[]</div>
<svg style="left:21.59999999999991px;top:414.7px" width="8" height="8" viewBox="0 0 8 8"><circle cx="4" cy="4" r="3.7" fill="url(#bg1)"/><path d="M0.9 3.7 H7.1" stroke="#a9cdf0" stroke-width=".7" opacity=".8"/></svg>
<div class="t" style="left:39.09999999999991px;top:411.6px;letter-spacing:-0.039px;">RGB_buffur1</div>
<div class="t" style="left:113.29999999999995px;top:411.6px;letter-spacing:0.304px;color:#957d47;">: uint32_t[]</div>
<svg style="left:22.5px;top:431.90000000000003px" width="7" height="7" viewBox="0 0 7 7"><circle cx="3.5" cy="3.5" r="2.7" fill="#72bd82" stroke="#3f9656" stroke-width=".9"/></svg>
<div class="t" style="left:39.09999999999991px;top:428.4px;letter-spacing:0.176px;">ws2812_set_RGB(uint8_t, uint8_t, uint8_t, uint16_t)</div>
<div class="t" style="left:327.70000000000005px;top:428.4px;letter-spacing:0.269px;color:#957d47;">: void</div>
<svg style="left:22.5px;top:448.7px" width="7" height="7" viewBox="0 0 7 7"><circle cx="3.5" cy="3.5" r="2.7" fill="#72bd82" stroke="#3f9656" stroke-width=".9"/></svg>
<div class="t" style="left:39.09999999999991px;top:445.2px;letter-spacing:0.179px;">ws2812_set_RGB1(uint8_t, uint8_t, uint8_t, uint16_t)</div>
<div class="t" style="left:334.79999999999995px;top:445.2px;letter-spacing:0.319px;color:#957d47;">: void</div>
<svg style="left:22.5px;top:465.5px" width="7" height="7" viewBox="0 0 7 7"><circle cx="3.5" cy="3.5" r="2.7" fill="#72bd82" stroke="#3f9656" stroke-width=".9"/></svg>
<div class="t" style="left:39.09999999999991px;top:462.0px;letter-spacing:0.133px;">HAL_TIM_PWM_PulseFinishedCallback(TIM_HandleTypeDef*)</div>
<div class="t" style="left:388px;top:462.0px;letter-spacing:0.219px;color:#957d47;">: void</div>
<svg style="left:22.5px;top:482.3px" width="7" height="7" viewBox="0 0 7 7"><circle cx="3.5" cy="3.5" r="2.7" fill="#72bd82" stroke="#3f9656" stroke-width=".9"/></svg>
<div class="t" style="left:39.09999999999991px;top:478.8px;letter-spacing:0.305px;">ws2812_example(void)</div>
<div class="t" style="left:172.79999999999995px;top:478.8px;letter-spacing:0.319px;color:#957d47;">: void</div>
<svg style="left:21.59999999999991px;top:498.7px" width="8" height="8" viewBox="0 0 8 8"><circle cx="4" cy="4" r="3.7" fill="url(#bg1)"/><path d="M0.9 3.7 H7.1" stroke="#a9cdf0" stroke-width=".7" opacity=".8"/></svg>
<div class="t" style="left:39.09999999999991px;top:495.6px;letter-spacing:0.334px;">interval_time_temp</div>
<div class="t" style="left:151px;top:495.6px;letter-spacing:0.222px;color:#957d47;">: uint8_t</div>
<svg style="left:22.5px;top:515.9px" width="7" height="7" viewBox="0 0 7 7"><circle cx="3.5" cy="3.5" r="2.7" fill="#72bd82" stroke="#3f9656" stroke-width=".9"/></svg>
<div class="t" style="left:39.09999999999991px;top:512.4px;letter-spacing:0.311px;">ws2812_example2(void)</div>
<div class="t" style="left:180px;top:512.4px;letter-spacing:0.302px;color:#957d47;">: void</div>
<svg style="left:22.5px;top:532.6999999999999px" width="7" height="7" viewBox="0 0 7 7"><circle cx="3.5" cy="3.5" r="2.7" fill="#72bd82" stroke="#3f9656" stroke-width=".9"/></svg>
<div class="t" style="left:39.09999999999991px;top:529.2px;letter-spacing:0.311px;">ws2812_example3(void)</div>
<div class="t" style="left:180px;top:529.2px;letter-spacing:0.302px;color:#957d47;">: void</div>
<div class="abs" style="left:18.40000000000009px;top:545.0px;width:107.6px;height:16.0px;background:#d9d9d9;"></div>
<svg style="left:22.5px;top:549.5px" width="7" height="7" viewBox="0 0 7 7"><circle cx="3.5" cy="3.5" r="2.7" fill="#72bd82" stroke="#3f9656" stroke-width=".9"/></svg>
<div class="t" style="left:39.09999999999991px;top:546.0px;letter-spacing:0.458px;">main(void)</div>
<div class="t" style="left:103.79999999999995px;top:546.0px;letter-spacing:0.371px;">: int</div>
<svg style="left:22.5px;top:566.3px" width="7" height="7" viewBox="0 0 7 7"><circle cx="3.5" cy="3.5" r="2.7" fill="#72bd82" stroke="#3f9656" stroke-width=".9"/></svg>
<div class="t" style="left:39.09999999999991px;top:562.8px;letter-spacing:0.242px;">SystemClock_Config(void)</div>
<div class="t" style="left:190.70000000000005px;top:562.8px;letter-spacing:0.269px;color:#957d47;">: void</div>
<svg style="left:22.5px;top:583.0999999999999px" width="7" height="7" viewBox="0 0 7 7"><circle cx="3.5" cy="3.5" r="2.7" fill="#72bd82" stroke="#3f9656" stroke-width=".9"/></svg>
<div class="t" style="left:32.40000000000009px;top:580.4px;font-size:7.7px;line-height:8px;height:8px;color:#d22c5c">S</div>
<div class="t" style="left:39.09999999999991px;top:579.6px;letter-spacing:0.250px;">MX_TIM1_Init(void)</div>
<div class="t" style="left:152.70000000000005px;top:579.6px;letter-spacing:0.269px;color:#957d47;">: void</div>
<svg style="left:22.5px;top:599.9px" width="7" height="7" viewBox="0 0 7 7"><circle cx="3.5" cy="3.5" r="2.7" fill="#72bd82" stroke="#3f9656" stroke-width=".9"/></svg>
<div class="t" style="left:32.40000000000009px;top:597.2px;font-size:7.7px;line-height:8px;height:8px;color:#d22c5c">S</div>
<div class="t" style="left:39.09999999999991px;top:596.4px;letter-spacing:0.250px;">MX_TIM2_Init(void)</div>
<div class="t" style="left:152.70000000000005px;top:596.4px;letter-spacing:0.269px;color:#957d47;">: void</div>
<svg style="left:22.5px;top:616.6999999999999px" width="7" height="7" viewBox="0 0 7 7"><circle cx="3.5" cy="3.5" r="2.7" fill="#72bd82" stroke="#3f9656" stroke-width=".9"/></svg>
<div class="t" style="left:32.40000000000009px;top:614.0px;font-size:7.7px;line-height:8px;height:8px;color:#d22c5c">S</div>
<div class="t" style="left:39.09999999999991px;top:613.2px;letter-spacing:0.250px;">MX_TIM3_Init(void)</div>
<div class="t" style="left:152.70000000000005px;top:613.2px;letter-spacing:0.269px;color:#957d47;">: void</div>
<svg style="left:22.5px;top:633.5px" width="7" height="7" viewBox="0 0 7 7"><circle cx="3.5" cy="3.5" r="2.7" fill="#72bd82" stroke="#3f9656" stroke-width=".9"/></svg>
<div class="t" style="left:32.40000000000009px;top:630.8000000000001px;font-size:7.7px;line-height:8px;height:8px;color:#d22c5c">S</div>
<div class="t" style="left:39.09999999999991px;top:630.0px;letter-spacing:0.250px;">MX_TIM4_Init(void)</div>
<div class="t" style="left:152.70000000000005px;top:630.0px;letter-spacing:0.269px;color:#957d47;">: void</div>
<svg style="left:22.5px;top:650.3px" width="7" height="7" viewBox="0 0 7 7"><circle cx="3.5" cy="3.5" r="2.7" fill="#72bd82" stroke="#3f9656" stroke-width=".9"/></svg>
<div class="t" style="left:32.40000000000009px;top:647.6px;font-size:7.7px;line-height:8px;height:8px;color:#d22c5c">S</div>
<div class="t" style="left:39.09999999999991px;top:646.8px;letter-spacing:0.250px;">MX_TIM5_Init(void)</div>
<div class="t" style="left:152.70000000000005px;top:646.8px;letter-spacing:0.269px;color:#957d47;">: void</div>
<svg style="left:22.5px;top:667.0999999999999px" width="7" height="7" viewBox="0 0 7 7"><circle cx="3.5" cy="3.5" r="2.7" fill="#72bd82" stroke="#3f9656" stroke-width=".9"/></svg>
<div class="t" style="left:32.40000000000009px;top:664.4px;font-size:7.7px;line-height:8px;height:8px;color:#d22c5c">S</div>
<div class="t" style="left:39.09999999999991px;top:663.6px;letter-spacing:0.250px;">MX_TIM8_Init(void)</div>
<div class="t" style="left:152.70000000000005px;top:663.6px;letter-spacing:0.269px;color:#957d47;">: void</div>
<svg style="left:22.5px;top:683.9px" width="7" height="7" viewBox="0 0 7 7"><circle cx="3.5" cy="3.5" r="2.7" fill="#72bd82" stroke="#3f9656" stroke-width=".9"/></svg>
<div class="t" style="left:32.40000000000009px;top:681.2px;font-size:7.7px;line-height:8px;height:8px;color:#d22c5c">S</div>
<div class="t" style="left:39.09999999999991px;top:680.4px;letter-spacing:0.304px;">MX_DMA_Init(void)</div>
<div class="t" style="left:152.70000000000005px;top:680.4px;letter-spacing:0.269px;color:#957d47;">: void</div>
<svg style="left:22.5px;top:700.6999999999999px" width="7" height="7" viewBox="0 0 7 7"><circle cx="3.5" cy="3.5" r="2.7" fill="#72bd82" stroke="#3f9656" stroke-width=".9"/></svg>
<div class="t" style="left:32.40000000000009px;top:698.0px;font-size:7.7px;line-height:8px;height:8px;color:#d22c5c">S</div>
<div class="t" style="left:39.09999999999991px;top:697.2px;letter-spacing:0.101px;">MX_GPIO_Init(void)</div>
<div class="t" style="left:152.70000000000005px;top:697.2px;letter-spacing:0.269px;color:#957d47;">: void</div>
<svg style="left:22.5px;top:717.5px" width="7" height="7" viewBox="0 0 7 7"><circle cx="3.5" cy="3.5" r="2.7" fill="#72bd82" stroke="#3f9656" stroke-width=".9"/></svg>
<div class="t" style="left:39.09999999999991px;top:714.0px;letter-spacing:0.249px;">Error_Handler(void)</div>
<div class="t" style="left:153.5999999999999px;top:714.0px;letter-spacing:0.285px;color:#957d47;">: void</div>
<svg style="left:21px;top:732.5px" width="12" height="11" viewBox="0 0 12 11"><circle cx="4.6" cy="6.2" r="2.6" fill="#6fb880" stroke="#4f9a62" stroke-width=".7"/><path d="M0.6 10.4 L11 1" stroke="#7a7a7a" stroke-width="1.1"/></svg>
<div class="t" style="left:39.09999999999991px;top:730.8px;letter-spacing:0.257px;color:#8a8a8a;">assert_failed(uint8_t*, uint32_t)</div>
<div class="t" style="left:218.0999999999999px;top:730.8px;letter-spacing:0.285px;color:#957d47;">: void</div>
</div>
<div class="abs" style="left:1903px;top:24px;width:17px;height:724px;background:#f0f0f0;"></div>
<div class="abs" style="left:1903px;top:228.3px;width:17px;height:501.5px;background:#cdcdcd;"></div>
<svg style="left:1907.3px;top:29.6px" width="8.4" height="6" viewBox="0 0 8.4 6"><path d="M0.9 5.1 L4.2 1.7 L7.5 5.1" fill="none" stroke="#4a4a4a" stroke-width="2"/></svg>
<svg style="left:1907.3px;top:736px" width="8.4" height="6" viewBox="0 0 8.4 6"><path d="M0.9 0.9 L4.2 4.3 L7.5 0.9" fill="none" stroke="#4a4a4a" stroke-width="2"/></svg>
<div class="abs" style="left:1519px;top:748px;width:384px;height:17px;background:#f0f0f0;"></div>
<div class="abs" style="left:1536.8px;top:748px;width:318.2px;height:17px;background:#cdcdcd;"></div>
<svg style="left:1523px;top:752.0px" width="6" height="9" viewBox="0 0 6 9"><path d="M5.1 0.9 L1.7 4.5 L5.1 8.1" fill="none" stroke="#505050" stroke-width="2"/></svg>
<svg style="left:1892.5px;top:752.0px" width="6" height="9" viewBox="0 0 6 9"><path d="M0.9 0.9 L4.3 4.5 L0.9 8.1" fill="none" stroke="#505050" stroke-width="2"/></svg>
<div class="abs" style="left:1903px;top:748px;width:17px;height:17px;background:#f0f0f0;"></div>
<div class="t" style="left:1768.6px;top:886.5px;letter-spacing:-0.266px;font-size:17px;line-height:24px;height:24px;color:#a2a2a2;text-shadow:0 0 1.5px #fff,0 0 1.5px #fff">CSDN @好奇龙猫</div>
</body></html>
